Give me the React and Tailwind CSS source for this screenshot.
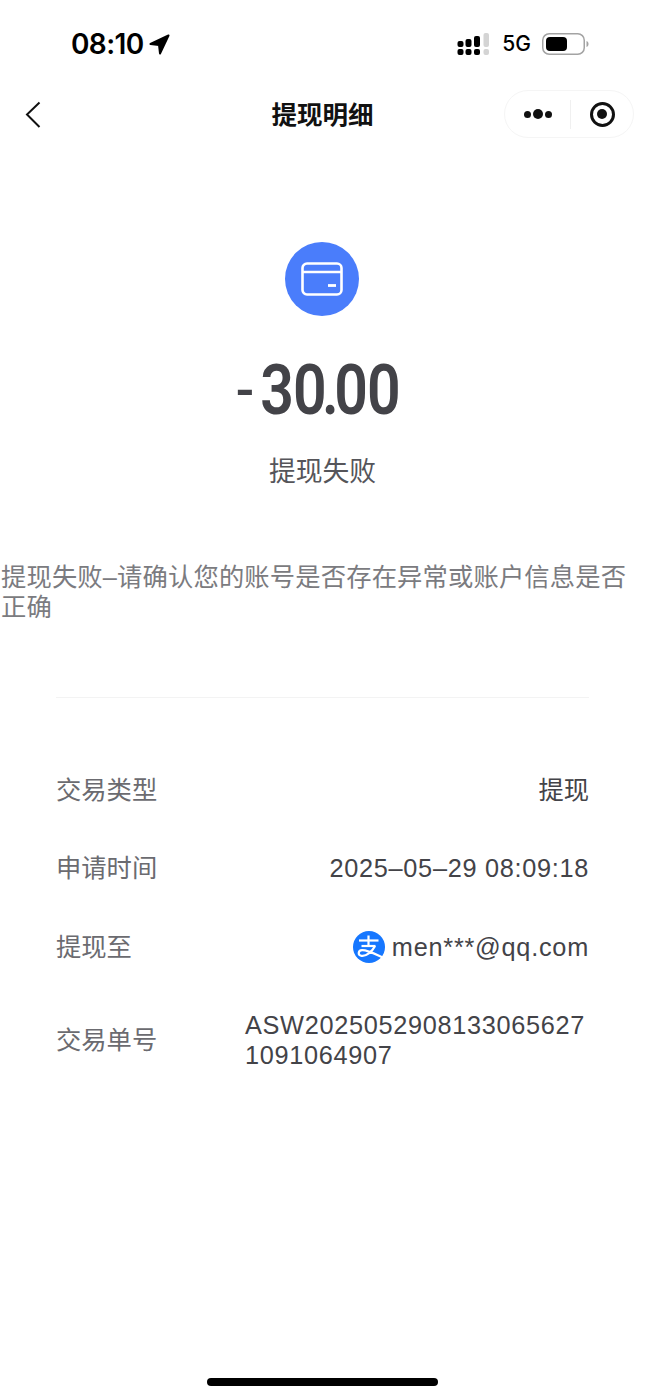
import React from "react";

const FONT = "font-['Liberation_Sans','Noto_Sans_CJK_SC',sans-serif]";

const SignalBars = () => (
  <svg width="34" height="23" viewBox="0 0 34 23">
    <g fill="#000">
      <rect x="0.5" y="8" width="6" height="6" rx="2" />
      <rect x="0.5" y="16" width="6" height="6" rx="2" />
      <rect x="8.5" y="6" width="6" height="8" rx="2" />
      <rect x="8.5" y="16" width="6" height="6" rx="2" />
      <rect x="17" y="3" width="6" height="11" rx="2" />
      <rect x="17" y="16" width="6" height="6" rx="2" />
    </g>
    <g fill="#d4d4d4">
      <rect x="26.5" y="0" width="5.5" height="14" rx="2" />
      <rect x="26.5" y="16" width="5.5" height="6" rx="2" />
    </g>
  </svg>
);

const Battery = () => (
  <svg width="47" height="22" viewBox="0 0 47 22">
    <rect x="0.75" y="0.75" width="41.5" height="20.5" rx="6.5" fill="none" stroke="#a3a3a3" strokeWidth="1.5" />
    <rect x="4" y="4" width="21" height="14" rx="4" fill="#000" />
    <path d="M44.5 8 C46 8.6 46.5 9.8 46.5 11 C46.5 12.2 46 13.4 44.5 14 Z" fill="#a3a3a3" />
  </svg>
);

const AlipayIcon = () => (
  <svg width="32" height="32" viewBox="0 0 32 32" className="shrink-0">
    <circle cx="16" cy="16" r="16" fill="#1677ff" />
    <g fill="none" stroke="#fff" strokeWidth="2.2" strokeLinecap="butt">
      <path d="M6 9.5 H25.5" />
      <path d="M15.5 4.5 V15" />
      <path d="M8.5 15 H22.5" />
      <path d="M22 15 C19 21 13 25.5 8.5 24.8 C4.5 24 5 19.5 9 19.2 C14 18.8 22 23 31 27" />
    </g>
  </svg>
);

const Row = ({ label, children, className = "" }) => (
  <div className={`flex items-center justify-between ${className}`}>
    <span className="text-[25.3px] leading-[30px] text-[#6b6b70]">{label}</span>
    {children}
  </div>
);

export default function App() {
  return (
    <div className={`${FONT} relative h-[1398px] w-[645px] overflow-hidden bg-white`}>
      {/* Status bar */}
      <div className="flex h-[90px] items-start justify-between pt-[27px] pl-[71px] pr-[56px]">
        <div className="flex h-[34px] items-center gap-[5px]">
          <span className="font-['Inter',sans-serif] text-[28px] font-semibold leading-[34px] tracking-[-0.6px] text-black">08:10</span>
          <svg width="21" height="21" viewBox="0 0 21 21">
            <path d="M19.5 1.5 L1.5 10 L10 11 L11 19.5 Z" fill="#000" stroke="#000" strokeWidth="2" strokeLinejoin="round" />
          </svg>
        </div>
        <div className="flex h-[34px] items-center gap-[11px]">
          <SignalBars />
          <span className="font-['Inter',sans-serif] text-[21px] font-medium leading-[34px] text-black">5G</span>
          <Battery />
        </div>
      </div>

      {/* Nav bar */}
      <div className="relative flex h-[50px] items-center justify-center">
        <svg width="16" height="28" viewBox="0 0 16 28" className="absolute left-[25px] top-[11px]">
          <path d="M14.5 1.5 L2 13.5 L14.5 26" fill="none" stroke="#111" strokeWidth="2" />
        </svg>
        <span className="text-[25.5px] font-semibold leading-[50px] text-[#111]">提现明细</span>
        <div className="absolute right-[11px] top-0 flex h-[48px] w-[130px] items-center rounded-full border border-[#f5f5f5]">
          <div className="flex w-[65px] items-center justify-center gap-[2px]">
            <span className="h-[7px] w-[7px] rounded-full bg-[#111]" />
            <span className="h-[10px] w-[10px] rounded-full bg-[#111]" />
            <span className="h-[7px] w-[7px] rounded-full bg-[#111]" />
          </div>
          <div className="h-[29px] w-px bg-[#f0f0f0]" />
          <div className="flex flex-1 items-center justify-center">
            <div className="flex h-[25px] w-[25px] items-center justify-center rounded-full border-[3px] border-[#111]">
              <span className="h-[10px] w-[10px] rounded-full bg-[#111]" />
            </div>
          </div>
        </div>
      </div>

      {/* Amount */}
      <div className="mt-[102px] flex flex-col items-center">
        <div className="mr-px flex h-[74px] w-[74px] items-center justify-center rounded-full bg-[#4a7dfb]">
          <svg width="42" height="34" viewBox="0 0 42 34">
            <rect x="1.5" y="1.5" width="39" height="31" rx="4.5" fill="none" stroke="#fff" strokeWidth="2.6" />
            <path d="M2 10 H40" stroke="#fff" strokeWidth="2.6" />
            <path d="M27 23.5 H35" stroke="#fff" strokeWidth="2.8" />
          </svg>
        </div>
        <div className="mt-[33px] mr-[9px] h-[82px] origin-center scale-x-[0.83] whitespace-nowrap font-['Roboto',sans-serif] text-[71px] font-semibold leading-[82px] tracking-[-1.2px] text-[#434348]">
          <span className="mr-[10px] font-normal">-</span>3<span className="tracking-[-5.5px]">0.</span>00
        </div>
        <div className="mt-[25px] text-[26.8px] leading-[32px] text-[#55555a]">提现失败</div>
      </div>

      {/* Failure reason */}
      <p className="mt-[74px] pl-px pr-[16px] text-[25.3px] leading-[30px] tracking-[0.16px] text-[#7b7b80]">
        提现失败–请确认您的账号是否存在异常或账户信息是否正确
      </p>

      <div className="mx-[56px] mt-[75px] border-t border-[#f3f3f3]" />

      {/* Details */}
      <div className="mx-[56px] mt-[77px] flex flex-col text-[#434348]">
        <Row label="交易类型">
          <span className="text-[25.3px] leading-[30px]">提现</span>
        </Row>
        <Row label="申请时间" className="mt-[48px]">
          <span className="text-[25.3px] leading-[30px] tracking-[0.7px]">2025–05–29 08:09:18</span>
        </Row>
        <Row label="提现至" className="mt-[48px]">
          <span className="flex items-center gap-[7px] text-[25.3px] leading-[30px] tracking-[0.75px]">
            <AlipayIcon />
            men***@qq.com
          </span>
        </Row>
        <Row label="交易单号" className="mt-[47px]">
          <span className="w-[344px] break-all text-[25.3px] leading-[30px] tracking-[0.68px]">ASW20250529081330656271091064907</span>
        </Row>
      </div>

      {/* Home indicator */}
      <div className="absolute bottom-[12px] left-[207px] h-[8px] w-[231px] rounded-full bg-black" />
    </div>
  );
}
